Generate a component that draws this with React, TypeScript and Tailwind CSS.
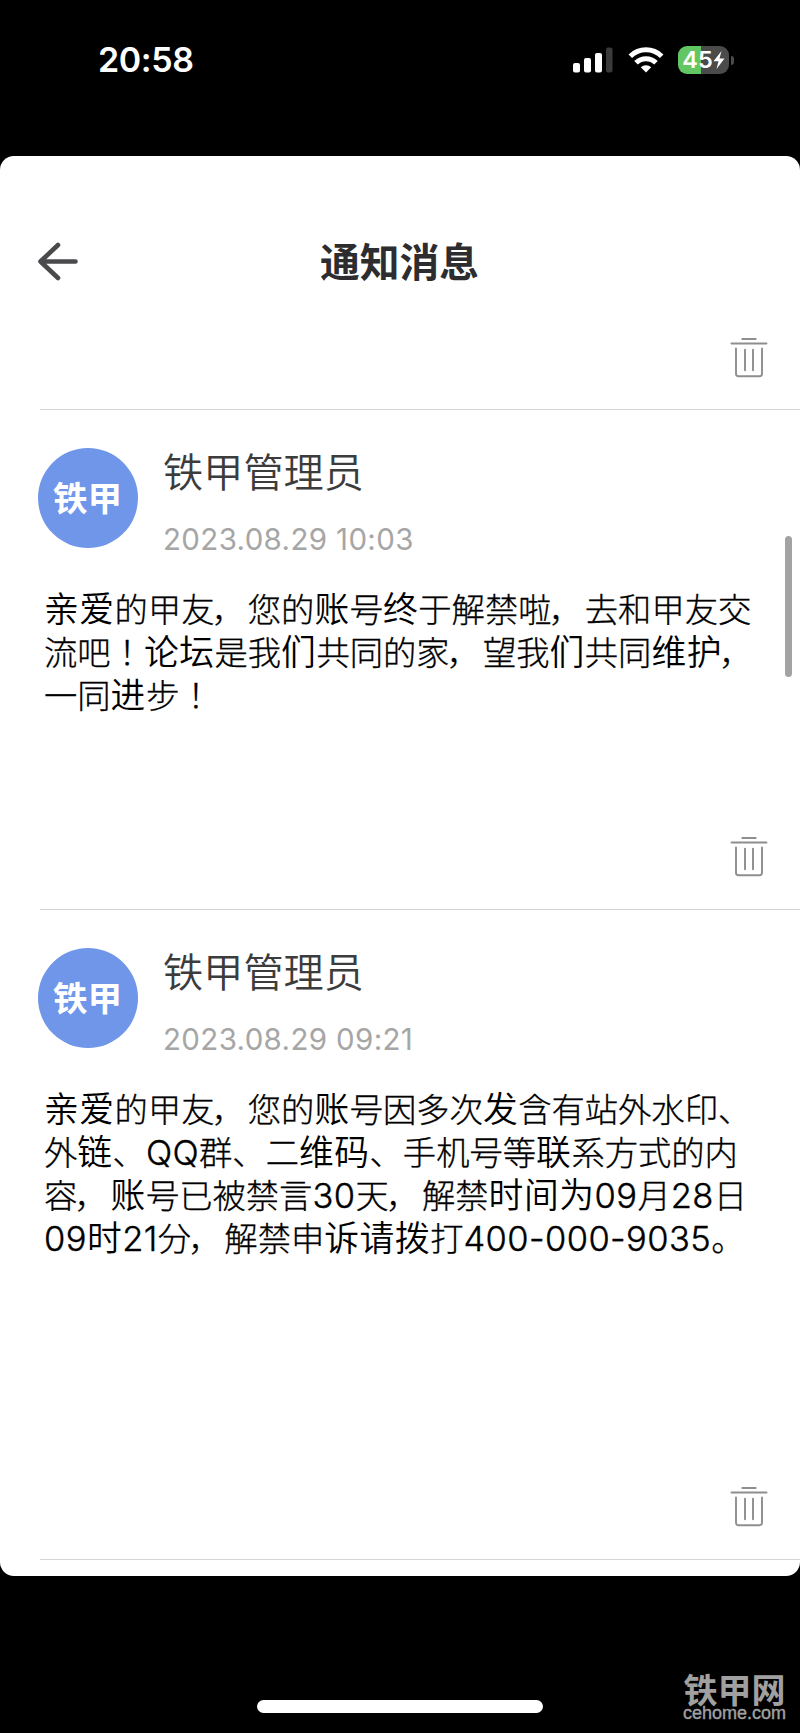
import type { ReactNode } from "react";

interface Message {
  id: number;
  time: string;
  lines: string[];
  height: string;
}

// Wrap a run in [] to draw it with the heavier simplified face
const MESSAGES: Message[] = [
  {
    id: 1,
    time: "2023.08.29 10:03",
    lines: [
      "[亲爱]的甲友，您的[账]号[终]于解禁啦，去和甲友交",
      "流吧！[论坛]是我[们]共同的家，望我[们]共同[维护]，",
      "一同[进]步！",
    ],
    height: "h-[500px]",
  },
  {
    id: 2,
    time: "2023.08.29 09:21",
    lines: [
      "[亲爱]的甲友，您的[账]号因多次[发]含有站外水印、",
      "外[链]、QQ群、二[维码]、手机号等[联]系方式的内",
      "容，[账]号已被禁言30天，解禁[时间为]09月28日",
      "09[时]21分，解禁申[诉请拨]打400-000-9035。",
    ],
    height: "h-[650px]",
  },
];

function renderLine(line: string): ReactNode[] {
  return line
    .split(/(\[[^\]]+\]|[A-Z0-9-]+|，)/)
    .filter(Boolean)
    .map((run, i) => {
      if (run.startsWith("[")) {
        return (
          <span
            key={i}
            className="font-['Noto_Sans_CJK_SC',sans-serif] font-[350] text-[34.8px] tracking-[0.5px] [-webkit-text-stroke:0px]"
          >
            {run.slice(1, -1)}
          </span>
        );
      }
      if (run === "，") {
        return (
          <span key={i} className="-ml-[3px] mr-[3px]">
            {run}
          </span>
        );
      }
      if (/^[A-Z0-9-]/.test(run)) {
        return (
          <span
            key={i}
            className="font-[Inter,sans-serif] font-[350] text-[34.5px] tracking-[0.4px] [-webkit-text-stroke:0.4px_black]"
          >
            {run}
          </span>
        );
      }
      return <span key={i}>{run}</span>;
    });
}

function StatusBar() {
  return (
    <header className="h-[156px] pt-[30px] pl-[98px] pr-[66px] flex items-start justify-between">
      <span className="font-[Inter,sans-serif] font-semibold text-[34px] leading-[60px] tracking-[-0.4px] text-white">
        20:58
      </span>
      <div className="h-[60px] flex items-center">
        <svg width="40" height="26" viewBox="0 0 40 26" className="mr-[15px]">
          <rect x="0" y="16" width="7" height="9.5" rx="2" fill="#fff" />
          <rect x="11" y="11" width="7" height="14.5" rx="2" fill="#fff" />
          <rect x="22" y="6" width="7" height="19.5" rx="2" fill="#fff" />
          <rect x="33" y="0.5" width="6.5" height="25" rx="2" fill="#3a3a3a" />
        </svg>
        <svg width="36" height="26" viewBox="0 0 36 26" className="mr-[14px]">
          <path
            d="M2.3 9.2a22.5 22.5 0 0 1 31.4 0"
            fill="none"
            stroke="#fff"
            strokeWidth="5"
          />
          <path
            d="M8 15.8a14.3 14.3 0 0 1 20 0"
            fill="none"
            stroke="#fff"
            strokeWidth="5"
          />
          <path d="M12.8 20.2a7.6 7.6 0 0 1 10.4 0L18 25.5z" fill="#fff" />
        </svg>
        <div className="flex items-center gap-[2px]">
          <div className="w-[51px] h-[28px] rounded-[9px] bg-linear-to-r from-[#62c762] from-[45%] to-[#4b4b4b] to-[45%] flex items-center justify-center">
            <span className="font-[Inter,sans-serif] font-semibold text-[23.5px] leading-[28px] text-white">
              45
            </span>
            <svg width="12" height="18" viewBox="0 0 12 18">
              <path d="M8.5 0 0.5 10.3h5L3.5 18 11.5 7.4h-5z" fill="#fff" />
            </svg>
          </div>
          <div className="w-[3px] h-[9px] rounded-r-full bg-[#4b4b4b]" />
        </div>
      </div>
    </header>
  );
}

function TrashIcon() {
  return (
    <svg
      width="38"
      height="42"
      viewBox="0 0 38 42"
      fill="none"
      stroke="#8e8e8e"
      strokeWidth="1.9"
      strokeLinecap="round"
    >
      <path d="M12.3 2h13.4M1.5 6.5h35" />
      <path d="M6 11.5v25.2a2.5 2.5 0 0 0 2.5 2.5h21a2.5 2.5 0 0 0 2.5-2.5V11.5" />
      <path d="M15 12.6v20.7M23 12.6v20.7" />
    </svg>
  );
}

function DeleteButton() {
  return (
    <button type="button" aria-label="删除" className="block ml-auto mr-[32px]">
      <TrashIcon />
    </button>
  );
}

function MessageItem({ message }: { message: Message }) {
  return (
    <article
      className={`${message.height} ml-[40px] border-t border-[#d4d4d4] pb-[31px] flex flex-col justify-between`}
    >
      <div>
        <div className="mt-[38px] -ml-[2.5px] flex">
          <div className="size-[100px] rounded-full bg-[#7096ea] flex items-center justify-center">
            <span className="-mt-[3px] font-['Noto_Sans_CJK_SC',sans-serif] font-bold text-[34.5px] leading-none text-white">
              铁甲
            </span>
          </div>
          <div className="ml-[25.5px] -mt-[3px]">
            <h2 className="font-['Noto_Sans_CJK_SC',sans-serif] font-[350] text-[40.2px] leading-[50px] text-[#3c3c3c]">
              铁甲管理员
            </h2>
            <time className="mt-[24px] block font-[Inter,sans-serif] text-[29.5px] leading-[40px] tracking-[0.35px] text-[#a6a6a6]">
              {message.time}
            </time>
          </div>
        </div>
        <div className="mt-[27px] ml-[4px] font-['Noto_Sans_CJK_JP',sans-serif] font-light text-[33.3px] leading-[43px] text-black [-webkit-text-stroke:0.3px_black]">
          {message.lines.map((line) => (
            <p key={line} className="h-[43px] whitespace-nowrap">
              {renderLine(line)}
            </p>
          ))}
        </div>
      </div>
      <DeleteButton />
    </article>
  );
}

export default function App() {
  return (
    <div className="relative w-[800px] h-[1733px] bg-black overflow-hidden flex flex-col">
      <StatusBar />
      <main className="relative h-[1420px] bg-white rounded-[14px] overflow-hidden">
        <div className="h-[181px] pt-[74px] px-[38px] grid grid-cols-[1fr_auto_1fr] items-start">
          <button type="button" aria-label="返回" className="mt-[12px]">
            <svg
              width="40"
              height="40"
              viewBox="0 0 40 40"
              fill="none"
              stroke="#4a4a4c"
              strokeWidth="4.6"
              strokeLinecap="round"
              strokeLinejoin="round"
            >
              <path d="M20 3 2.5 19.5 20 36M2.5 19.5H37.5" />
            </svg>
          </button>
          <h1 className="-ml-[1px] font-['Noto_Sans_CJK_SC',sans-serif] font-bold text-[39.8px] leading-[60px] text-[#2d2d30]">
            通知消息
          </h1>
        </div>
        <div className="h-[72px]">
          <DeleteButton />
        </div>
        {MESSAGES.map((message) => (
          <MessageItem key={message.id} message={message} />
        ))}
        <div className="ml-[40px] h-[17px] border-t border-[#d4d4d4]" />
        <div className="absolute right-[8px] top-[380px] w-[7px] h-[141px] rounded-full bg-[#a3a3a3]" />
      </main>
      <footer className="flex-1 pt-[124px] flex justify-center">
        <div className="w-[286px] h-[13px] rounded-full bg-white" />
      </footer>
      <div className="absolute right-[14px] bottom-[11px] flex flex-col items-center text-[#a0a0a0]">
        <span className="font-['Noto_Sans_CJK_SC',sans-serif] font-bold text-[34px] leading-[28px]">
          铁甲网
        </span>
        <span className="mt-px font-['Liberation_Sans',sans-serif] text-[18px] leading-[18px] [-webkit-text-stroke:0.4px_#a0a0a0]">
          cehome.com
        </span>
      </div>
    </div>
  );
}
